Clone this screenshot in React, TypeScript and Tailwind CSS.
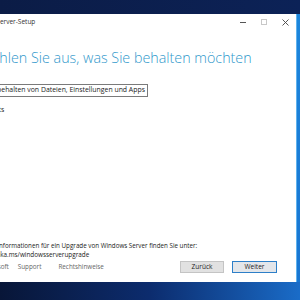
import React from "react";

const font = { fontFamily: '"Open Sans", "Noto Sans", "Liberation Sans", sans-serif' };

export default function App() {
  return (
    <div className="w-[300px] h-[300px] overflow-hidden flex flex-col bg-[#0a1b45]" style={font}>
      <div className="h-[14px] shrink-0 bg-gradient-to-r from-[#0b1c46] to-[#0c2257]" />
      <div className="h-[268px] shrink-0 flex">
        <div className="w-[296px] h-full bg-white flex flex-col overflow-hidden relative">
          {/* title bar */}
          <div className="h-[16px] shrink-0 flex items-center">
            <div className="ml-[-33px] text-[6.5px] text-[#333] whitespace-nowrap">Windows Server-Setup</div>
            <div className="flex-1" />
            <div className="flex items-center gap-[15px] mr-[7px]">
              <div className="w-[6px] h-px bg-[#555]" />
              <div className="w-[6px] h-[6px] border border-[#c8c8c8]" />
              <svg width="7" height="7" viewBox="0 0 7 7">
                <path d="M0.5 0.5 L6.5 6.5 M6.5 0.5 L0.5 6.5" stroke="#444" strokeWidth="0.9" />
              </svg>
            </div>
          </div>
          {/* heading */}
          <div className="mt-[17px] ml-[-21px] text-[14.3px] font-light text-[#2f98cb] whitespace-nowrap leading-[21px]">
            Wählen Sie aus, was Sie behalten möchten
          </div>
          {/* options */}
          <div className="mt-[16px] ml-[-16px] self-start border border-[#7a7a7a] px-[2px] h-[13px] flex items-center text-[6.9px] text-[#222] whitespace-nowrap">
            Beibehalten von Dateien, Einstellungen und Apps
          </div>
          <div className="mt-[8px] ml-[-16px] text-[6.9px] text-[#222] whitespace-nowrap leading-[10px]">
            Nichts
          </div>
          <div className="flex-1" />
          {/* footer */}
          <div className="ml-[-27px] text-[6.25px] text-[#222] whitespace-nowrap leading-[9px]">
            Weitere Informationen für ein Upgrade von Windows Server finden Sie unter:
          </div>
          <div className="ml-[-25px] text-[6.35px] text-[#222] whitespace-nowrap leading-[9px]">
            https://aka.ms/windowsserverupgrade
          </div>
          <div className="flex items-center mt-[2px] mb-[9px] h-[12px]">
            <div className="ml-[-19px] flex gap-[9px] text-[6.3px] text-[#666] whitespace-nowrap">
              <span>Microsoft</span>
              <span>Support</span>
              <span className="ml-[8px]">Rechtshinweise</span>
            </div>
            <div className="flex-1" />
            <div className="flex gap-[8px] mr-[19px]">
              <div className="w-[44px] h-[12px] bg-[#e1e1e1] border border-[#c4c4c4] flex items-center justify-center text-[6.5px] text-[#222]">
                Zurück
              </div>
              <div className="w-[45px] h-[12px] bg-[#e3e6ea] border-[1.5px] border-[#2d7fc8] flex items-center justify-center text-[6.5px] text-[#222]">
                Weiter
              </div>
            </div>
          </div>
        </div>
        <div className="flex-1 flex">
          <div className="w-px bg-[#5fb2ee]" />
          <div className="flex-1 bg-gradient-to-b from-[#1d86dc] to-[#1976d2]" />
        </div>
      </div>
      <div className="flex-1 bg-gradient-to-r from-[#081638] via-[#0c2c6e] to-[#1a6cc8]" />
    </div>
  );
}
